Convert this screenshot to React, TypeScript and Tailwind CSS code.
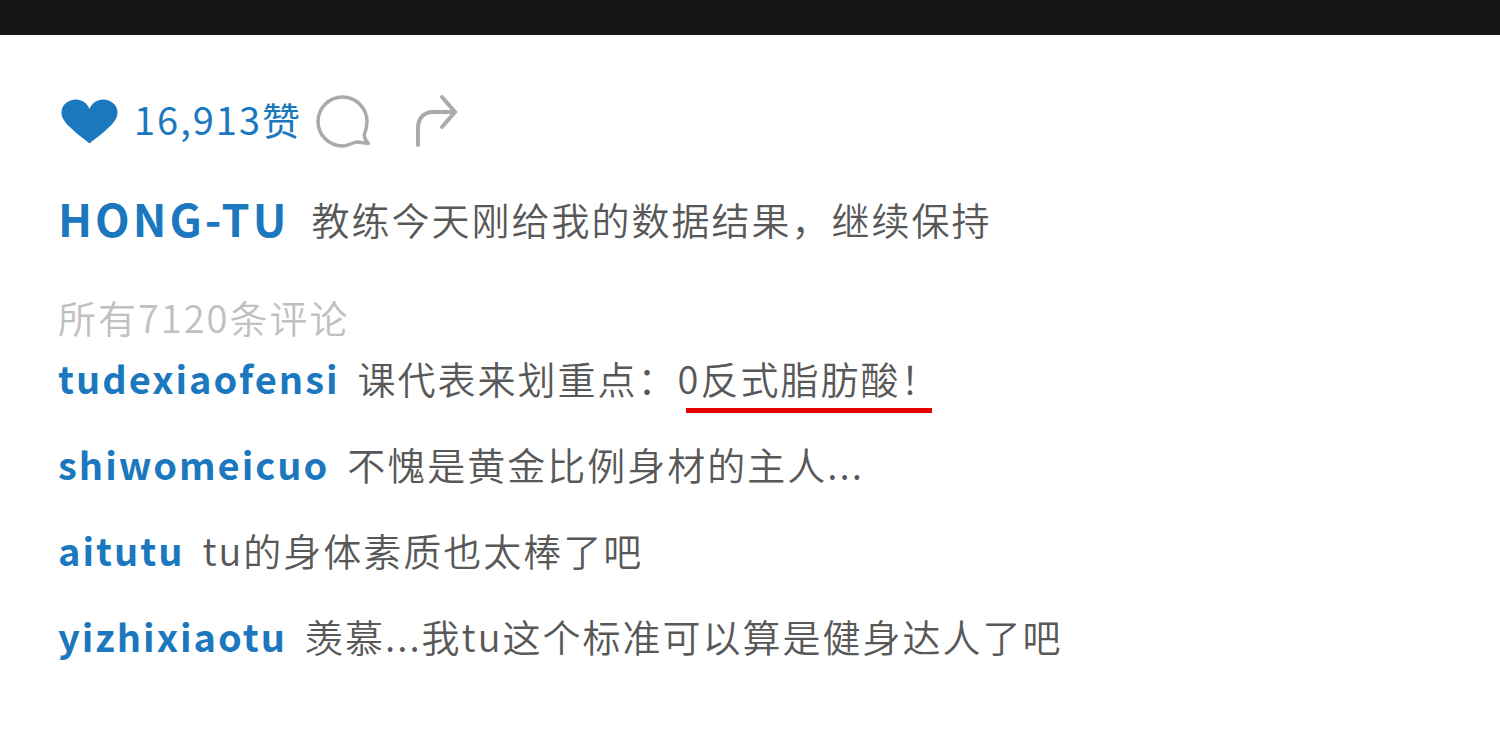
const comments = [
  { user: "tudexiaofensi", text: "课代表来划重点：", marked: "0反式脂肪酸！" },
  { user: "shiwomeicuo", text: "不愧是黄金比例身材的主人...", marked: "" },
  { user: "aitutu", text: "tu的身体素质也太棒了吧", marked: "" },
  { user: "yizhixiaotu", text: "羡慕...我tu这个标准可以算是健身达人了吧", marked: "" },
];

export default function App() {
  return (
    <div className="min-h-screen bg-white font-['Noto_Sans_CJK_SC',sans-serif] text-[38px] font-[350] tracking-[2px] text-[#585858]">
      <header className="h-[35px] bg-[#141414]" />
      <main className="px-[58px] pt-[53px] whitespace-nowrap">
        <div className="flex h-[66px] items-center text-[#1b78be]">
          <button aria-label="赞" className="mr-4 ml-[3px]">
            <svg width="57" height="46" viewBox="0 0 57 46" fill="currentColor" className="block">
              <path d="M28.5 45.500C25 42 18 38 11 31C4 25 0.500 20 0.500 14.500C0.500 7 7 1.500 15 1.500C21 1.500 26 5 28.500 11C31 5 36 1.500 42 1.500C50 1.500 56.500 7 56.500 14.500C56.500 20 53 25 46 31C39 38 32 42 28.500 45.500Z" />
            </svg>
          </button>
          <span className="pb-[6px] font-normal">16,913赞</span>
          <button aria-label="评论" className="ml-[14px]">
            <svg width="54" height="54" viewBox="0 0 54 54" fill="none" stroke="#aaaaaa" strokeWidth="3.500" className="block">
              <path d="M48.500 40C50 36 51 31.500 51 27.500A24.500 24.500 0 1 0 26.500 52C31 52 35 50 38.500 48.500C42 47 47 49.500 52 49.200C50 46.500 47.500 43 48.500 40Z" strokeLinejoin="miter" />
            </svg>
          </button>
          <button aria-label="分享" className="ml-11">
            <svg width="44" height="54" viewBox="0 0 44 54" fill="none" stroke="#aaaaaa" strokeWidth="4" strokeLinecap="round" className="block">
              <path d="M4 51V34C4 24 10 18 19 18H41M28 3L41 18L28 33" />
            </svg>
          </button>
        </div>
        <div className="mt-[31px] flex h-[66px] items-center gap-[22px]">
          <a href="#user" className="text-[45px] font-bold tracking-[3px] text-[#1b78be]">HONG-TU</a>
          <p>教练今天刚给我的数据结果，继续保持</p>
        </div>
        <a href="#comments" className="mt-[37px] flex h-[56px] items-center text-[#c0c0c0]">所有7120条评论</a>
        <ul className="flex flex-col gap-5">
          {comments.map((c) => (
            <li key={c.user} className="flex h-[66px] items-center gap-[18px]">
              <a href="#user" className="font-bold text-[#1b78be]">{c.user}</a>
              <p>
                {c.text}
                {c.marked && (
                  <span className="relative">
                    {c.marked}
                    <span className="absolute right-2 -bottom-2 left-2 h-[5px] bg-[#e60000]" />
                  </span>
                )}
              </p>
            </li>
          ))}
        </ul>
      </main>
    </div>
  );
}
